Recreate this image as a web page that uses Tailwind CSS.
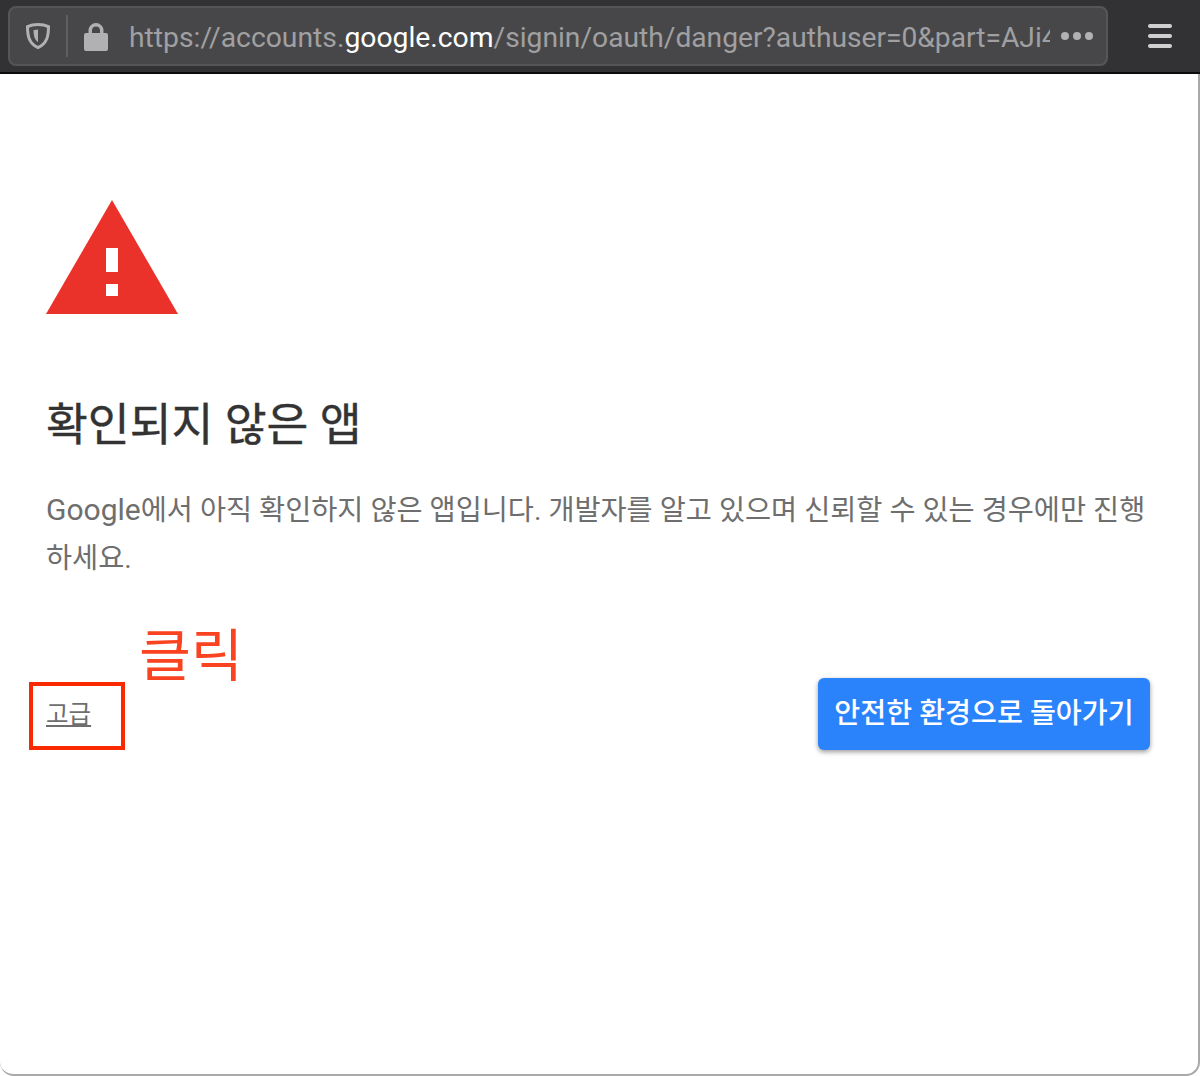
<!doctype html>
<html lang="ko">
<head>
<meta charset="utf-8">
<script src="https://cdn.jsdelivr.net/npm/@tailwindcss/browser@4"></script>
</head>
<body class="bg-white">
<div class="relative flex h-[1076px] w-[1200px] flex-col overflow-hidden bg-white font-['Roboto','Noto_Sans_CJK_KR',sans-serif]">
  <header class="flex h-[74px] shrink-0 items-start border-b-2 border-[#0c0c0d] bg-[#323234] pt-[6px] pl-[8px]">
    <div class="flex h-[60px] w-[1100px] items-center overflow-hidden rounded-[8px] border-2 border-[#565658] bg-[#474749]">
      <svg class="ml-[15px] h-[28px] w-[26px] shrink-0" viewBox="0 0 26 28" fill="none">
        <path d="M13 2.500C9.500 2.500 5.500 3.200 2.500 4.600c0 8 .8 16.500 10.500 21 9.700-4.500 10.500-13 10.500-21-3-1.400-7-2.100-10.500-2.100Z" stroke="#b1b1b3" stroke-width="3"/>
        <path d="M13 7.500c-1.500 0-3 .3-4.500.8 0 4 .6 9 4.500 12Z" fill="#b1b1b3"/>
      </svg>
      <div class="ml-[15px] h-[42px] w-[2px] shrink-0 bg-[#5f5f61]"></div>
      <svg class="ml-[15px] h-[29px] w-[26px] shrink-0" viewBox="0 0 26 29" fill="#b1b1b3">
        <path fill-rule="evenodd" d="M5.500 11V8.500a7.500 7.500 0 0 1 15 0V11h2.500a2 2 0 0 1 2 2v14a2 2 0 0 1-2 2H3a2 2 0 0 1-2-2V13a2 2 0 0 1 2-2Zm3.500 0h8V8.500a4 4 0 0 0-8 0Z"/>
      </svg>
      <div class="ml-[20px] mt-[4px] w-[921px] shrink-0 overflow-hidden whitespace-nowrap text-[28.300px] leading-[36px] text-[#a0a0a2]">https://accounts.<span class="text-white">google.com</span><span class="text-[28.200px]">/signin/oauth/danger?authuser=0&amp;part=AJi4abcdefg</span></div>
      <div class="ml-[11px] flex gap-[4px]">
        <span class="h-[8px] w-[8px] rounded-full bg-[#b1b1b3]"></span>
        <span class="h-[8px] w-[8px] rounded-full bg-[#b1b1b3]"></span>
        <span class="h-[8px] w-[8px] rounded-full bg-[#b1b1b3]"></span>
      </div>
    </div>
    <div class="ml-[40px] mt-[18px] flex w-[24px] flex-col gap-[6px]">
      <span class="h-[4px] rounded-full bg-[#d0d0d1]"></span>
      <span class="h-[4px] rounded-full bg-[#d0d0d1]"></span>
      <span class="h-[4px] rounded-full bg-[#d0d0d1]"></span>
    </div>
  </header>

  <main class="relative flex-1 rounded-b-[14px] border-r-2 border-b-2 border-[#a9a9a9] pl-[46px] pr-[48px] pt-[126px]">
    <svg class="block h-[114px] w-[132px]" viewBox="0 0 132 114">
      <path d="M66 0 132 114H0Z" fill="#ea322a"/>
      <rect x="60" y="48" width="12" height="24" fill="#fff"/>
      <rect x="60" y="84" width="12" height="12" fill="#fff"/>
    </svg>
    <h1 class="mt-[82px] text-[45.500px] leading-[60px] font-normal text-[#333333] [-webkit-text-stroke:0.4px_#333333]">확인되지 않은 앱</h1>
    <p class="mt-[30px] text-[28.350px] leading-[48px] text-[#6e6e6e]"><span class="text-[30px]">Google</span>에서 아직 확인하지 않은 앱입니다. 개발자를 알고 있으며 신뢰할 수 있는 경우에만 진행하세요.</p>
    <div class="mt-[95px] flex items-center justify-between">
      <a class="mt-[2px] text-[24.500px] leading-[32px] text-[#6e6e6e] underline">고급</a>
      <button class="h-[72px] w-[332px] rounded-[6px] bg-[#2b83fc] text-[28.200px] font-medium text-white shadow-[0_2px_5px_rgba(0,0,0,0.4)]">안전한 환경으로 돌아가기</button>
    </div>
    <div class="absolute left-[29px] top-[608px] h-[68px] w-[96px] border-4 border-[#fa2a00]"></div>
    <div class="absolute left-[139px] top-[545px] text-[56.500px] leading-[76px] text-[#fa4320]">클릭</div>
  </main>
</div>
</body>
</html>
